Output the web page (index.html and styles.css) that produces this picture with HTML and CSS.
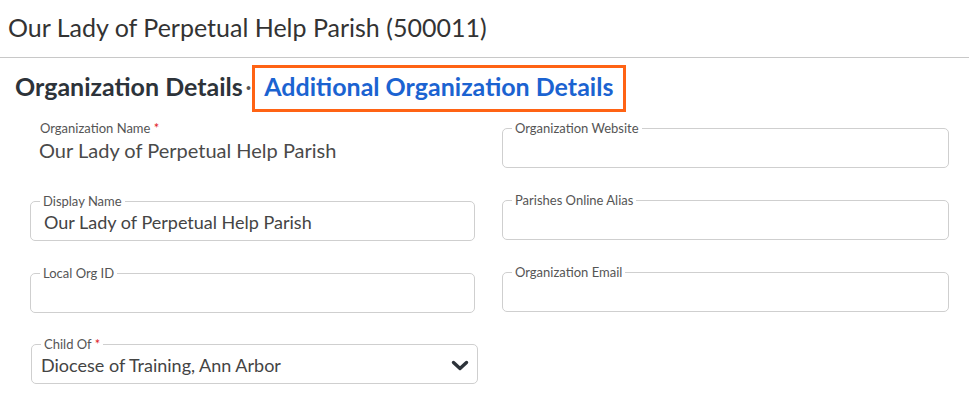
FILE: index.html
```html
<!DOCTYPE html>
<html>
<head>
<meta charset="utf-8">
<link rel="stylesheet" href="styles.css">
</head>
<body>
<header class="page-head">
  <h1 class="title">Our Lady of Perpetual Help Parish (500011)</h1>
</header>
<section class="section">
  <h2 class="section-title"><span class="crumb">Organization Details</span><span class="sep">·</span><span class="hl"><a class="link" href="#">Additional Organization Details</a></span></h2>
  <div class="grid">
    <div class="col">
      <div class="readonly">
        <div class="ro-label">Organization Name <span class="req">*</span></div>
        <div class="ro-value">Our Lady of Perpetual Help Parish</div>
      </div>
      <fieldset class="field"><legend>Display Name</legend><div class="val">Our Lady of Perpetual Help Parish</div></fieldset>
      <fieldset class="field"><legend>Local Org ID</legend><div class="val"></div></fieldset>
      <fieldset class="field select"><legend>Child Of <span class="req">*</span></legend><div class="val"><span>Diocese of Training, Ann Arbor</span>
        <svg class="chev" width="18" height="12" viewBox="0 0 18 12"><path d="M2.5 2.5 L9 8.5 L15.5 2.5" fill="none" stroke="#2d333a" stroke-width="3.4" stroke-linecap="round" stroke-linejoin="round"/></svg></div>
      </fieldset>
    </div>
    <div class="col">
      <fieldset class="field"><legend>Organization Website</legend><div class="val"></div></fieldset>
      <fieldset class="field"><legend>Parishes Online Alias</legend><div class="val"></div></fieldset>
      <fieldset class="field"><legend>Organization Email</legend><div class="val"></div></fieldset>
    </div>
  </div>
</section>
</body>
</html>
```
FILE: styles.css
```css
* { box-sizing: border-box; }
html, body { margin: 0; padding: 0; background: #fff; }
body { font-family: "Lato", "Open Sans", sans-serif; color: #2d333a; }
.page-head { border-bottom: 1px solid #c8c8c8; height: 58px; padding: 10px 0 0 8px; }
.title { margin: 0; font-weight: 400; font-size: 25px; line-height: 34px; color: #333; }
.section { padding: 7px 0 0 15px; }
.section-title { margin: 0; font-size: 25px; font-weight: 700; display: flex; align-items: stretch; color: #2d333a; height: 47px; }
.crumb, .sep { display: flex; align-items: center; padding-bottom: 5px; }
.sep { margin: 0 1px 0 3px; color: #555; font-weight: 700; font-size: 20px; }
.hl { border: 3px solid #ff6314; padding: 0 10px 5px 9px; height: 47px; display: flex; align-items: center; }
.link { color: #1b63d1; text-decoration: none; }
.grid { display: grid; grid-template-columns: 445px 447px; column-gap: 27px; padding-left: 15px; margin-top: 9px; }
.col { display: flex; flex-direction: column; }
.readonly { height: 73px; padding-left: 10px; padding-top: 0; }
.ro-label { font-size: 13px; color: #555; line-height: 15px; }
.ro-value { font-size: 20px; color: #4a4a4a; line-height: 24px; margin-top: 2px; margin-left: -1px; }
.req { color: #e01b1b; }
.field { margin: 0 0 25px 0; border: 1px solid #cfcfcf; border-radius: 5px; height: 47px; padding: 0 12px 0 13px; min-width: 0; }
.field legend { font-size: 13px; color: #555; padding: 0 3px; margin-left: -4px; line-height: 14px; }
.val { font-size: 18px; color: #444; line-height: 22px; margin-top: 3px; display: flex; justify-content: space-between; align-items: center; }
.select { margin-left: 1px; margin-right: -3px; margin-top: -1px; padding: 0 8px 0 9px; }
.select legend { margin-left: 0; }
.chev { flex: none; margin-top: 2px; }
```
